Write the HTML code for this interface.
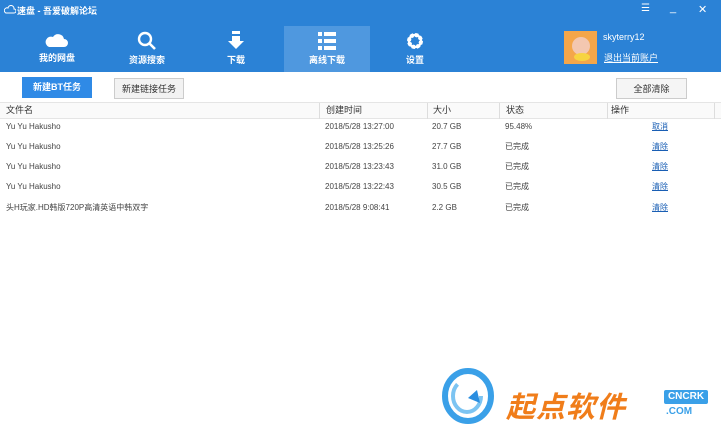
<!DOCTYPE html>
<html><head><meta charset="utf-8"><style>
*{margin:0;padding:0;box-sizing:border-box}
body{width:721px;height:429px;overflow:hidden;background:#fff;font-family:"Liberation Sans","Noto Sans CJK SC",sans-serif;font-size:9px;color:#333;position:relative}
.hdr{position:absolute;left:0;top:0;width:721px;height:72px;background:#2b82d6}
.t{position:absolute;color:#fff}
.tab{position:absolute;top:26px;width:86px;height:46px;text-align:center;color:#fff;font-size:9px;font-weight:bold}
.tab svg{display:block;margin:5px auto 2px}
.btn{position:absolute;height:21px;font-size:9px;text-align:center;line-height:20px}
.th{position:absolute;top:103px;height:16px;line-height:15px;font-size:9px;color:#333;border-right:1px solid #ddd}
.row{position:absolute;left:0;width:721px;height:20px;font-size:8px;color:#444}
.row span{position:absolute;top:0;line-height:20px}
a{color:#1a5fb4;text-decoration:underline}
</style></head><body>
<div class="hdr"></div>
<svg style="position:absolute;left:4px;top:5px" width="12" height="10" viewBox="0 0 12 10"><path d="M2 8h8a2 2 0 0 0 0-4 3 3 0 0 0-6-1A2.5 2.5 0 0 0 2 8z" fill="none" stroke="#fff" stroke-width="1"/></svg>
<div class="t" style="left:17px;top:4px;font-size:9px;font-weight:bold">速盘 - 吾爱破解论坛</div>
<div class="t" style="left:641px;top:3px;font-size:10px">☰</div>
<div class="t" style="left:670px;top:2px;font-size:11px">_</div>
<div class="t" style="left:698px;top:3px;font-size:11px">✕</div>
<div class="tab" style="left:14px"><svg width="24" height="18" viewBox="0 0 24 18"><path d="M4 16h15a4 4 0 0 0 0-8 6 6 0 0 0-11-2 5 5 0 0 0-4 10z" fill="#fff"/></svg>我的网盘</div>
<div class="tab" style="left:104px"><svg width="22" height="20" viewBox="0 0 22 20"><circle cx="9" cy="8" r="6" fill="none" stroke="#fff" stroke-width="2.4"/><path d="M13 12l6 6" stroke="#fff" stroke-width="2.6"/></svg>资源搜索</div>
<div class="tab" style="left:193px"><svg width="20" height="20" viewBox="0 0 20 20"><rect x="6" y="0" width="8" height="3" fill="#fff"/><path d="M6 5h8v5h4l-8 8-8-8h4z" fill="#fff"/></svg>下载</div>
<div class="tab" style="left:284px;background:#4f98df"><svg width="22" height="20" viewBox="0 0 22 20"><g fill="#fff"><rect x="2" y="1" width="4" height="4"/><rect x="8" y="1" width="12" height="4"/><rect x="2" y="8" width="4" height="4"/><rect x="8" y="8" width="12" height="4"/><rect x="2" y="15" width="4" height="4"/><rect x="8" y="15" width="12" height="4"/></g></svg>离线下载</div>
<div class="tab" style="left:372px"><svg width="22" height="20" viewBox="0 0 22 20"><circle cx="11" cy="10" r="6" fill="none" stroke="#fff" stroke-width="4" stroke-dasharray="3 1.7"/><circle cx="11" cy="10" r="6" fill="none" stroke="#fff" stroke-width="2.5"/></svg>设置</div>
<div style="position:absolute;left:564px;top:31px;width:33px;height:33px;background:#f4a64a"><div style="position:absolute;left:8px;top:6px;width:18px;height:18px;border-radius:50%;background:#f3c7b0"></div><div style="position:absolute;left:10px;top:22px;width:16px;height:8px;border-radius:50%;background:#f7d440"></div></div>
<div class="t" style="left:603px;top:32px;font-size:9px">skyterry12</div>
<div class="t" style="left:604px;top:51px;font-size:9px;text-decoration:underline">退出当前账户</div>
<div class="btn" style="left:22px;top:77px;width:70px;background:#2f8ae6;color:#fff;font-weight:bold">新建BT任务</div>
<div class="btn" style="left:114px;top:78px;width:70px;background:#f2f2f2;border:1px solid #ccc">新建链接任务</div>
<div class="btn" style="left:616px;top:78px;width:71px;background:#f5f5f5;border:1px solid #ccc">全部清除</div>
<div style="position:absolute;left:0;top:102px;width:721px;height:17px;border-top:1px solid #e5e5e5;border-bottom:1px solid #e5e5e5;background:#fafafa"></div>
<div class="th" style="left:0;width:320px;padding-left:6px">文件名</div>
<div class="th" style="left:320px;width:108px;padding-left:6px">创建时间</div>
<div class="th" style="left:428px;width:72px;padding-left:5px">大小</div>
<div class="th" style="left:500px;width:108px;padding-left:6px">状态</div>
<div class="th" style="left:608px;width:107px;padding-left:3px">操作</div>
<div class="row" style="top:117px"><span style="left:6px">Yu Yu Hakusho</span><span style="left:325px">2018/5/28 13:27:00</span><span style="left:432px">20.7 GB</span><span style="left:505px">95.48%</span><span style="left:652px"><a>取消</a></span></div>
<div class="row" style="top:137px"><span style="left:6px">Yu Yu Hakusho</span><span style="left:325px">2018/5/28 13:25:26</span><span style="left:432px">27.7 GB</span><span style="left:505px">已完成</span><span style="left:652px"><a>清除</a></span></div>
<div class="row" style="top:157px"><span style="left:6px">Yu Yu Hakusho</span><span style="left:325px">2018/5/28 13:23:43</span><span style="left:432px">31.0 GB</span><span style="left:505px">已完成</span><span style="left:652px"><a>清除</a></span></div>
<div class="row" style="top:177px"><span style="left:6px">Yu Yu Hakusho</span><span style="left:325px">2018/5/28 13:22:43</span><span style="left:432px">30.5 GB</span><span style="left:505px">已完成</span><span style="left:652px"><a>清除</a></span></div>
<div class="row" style="top:198px"><span style="left:6px">头H玩家.HD韩版720P高清英语中韩双字</span><span style="left:325px">2018/5/28 9:08:41</span><span style="left:432px">2.2 GB</span><span style="left:505px">已完成</span><span style="left:652px"><a>清除</a></span></div>
<svg style="position:absolute;left:438px;top:366px" width="60" height="60" viewBox="0 0 60 60"><ellipse cx="30" cy="30" rx="23" ry="25" fill="none" stroke="#3aa0e8" stroke-width="6"/><ellipse cx="29" cy="30" rx="14" ry="16" fill="none" stroke="#7cc4f2" stroke-width="4" stroke-dasharray="60 40"/><path d="M30 32l12 5-3-13z" fill="#2a8ee0"/></svg>
<div style="position:absolute;left:506px;top:384px;font-size:29px;font-weight:bold;color:#f07d1a;font-style:italic;letter-spacing:1px">起点软件</div>
<div style="position:absolute;left:664px;top:390px;width:44px;height:14px;background:#3aa0e8;color:#fff;font-size:10px;font-weight:bold;text-align:center;line-height:14px;border-radius:2px">CNCRK</div>
<div style="position:absolute;left:666px;top:406px;font-size:10px;font-weight:bold;color:#3aa0e8">.COM</div>
</body></html>
